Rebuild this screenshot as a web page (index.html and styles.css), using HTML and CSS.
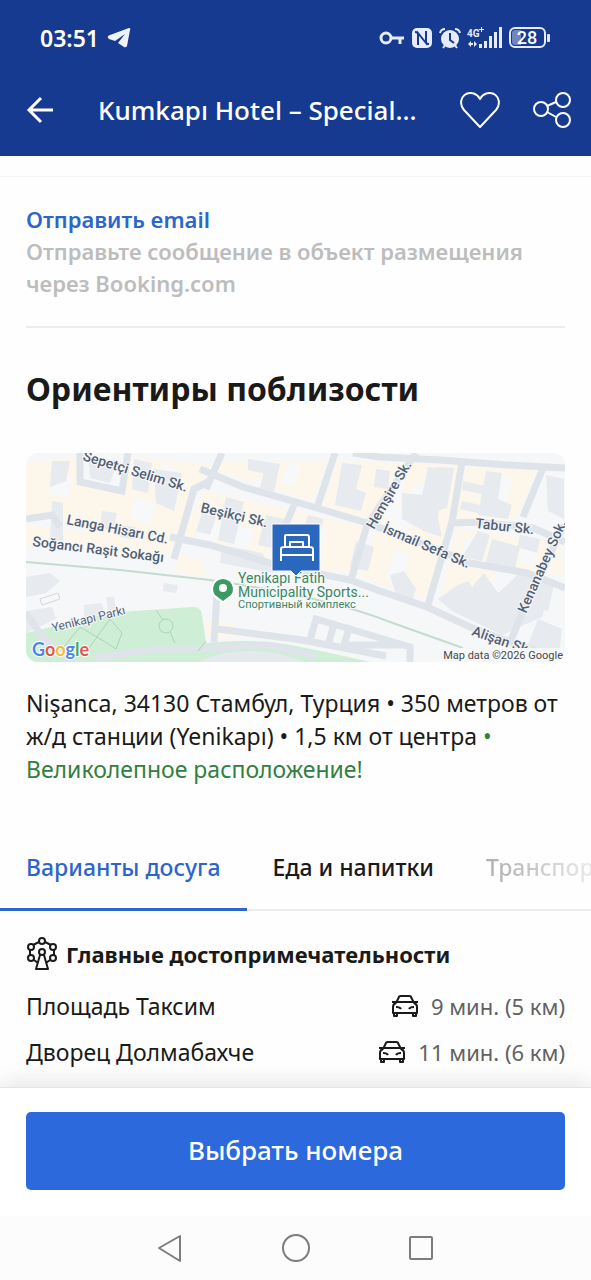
FILE: index.html
```html
<!DOCTYPE html>
<html lang="ru">
<head>
  <meta charset="UTF-8">
  <meta name="viewport" content="width=device-width, initial-scale=1">
  <title>Kumkapı Hotel</title>
  <link rel="stylesheet" href="styles.css">
</head>
<body>
  <header class="header">
    <div class="status">
      <div class="status-left">
        <span class="time">03:51</span>
        <svg width="24" height="22" viewBox="0 0 24 22"><path d="M1 11Q0 9 3 8L22 1Q24 1 23 3L20 19Q19 21 17 20L11 16L18 7L8 14L2 12Z" fill="#eef3ff"/></svg>
      </div>
      <div class="status-right">
        <svg width="26" height="18" viewBox="0 0 26 18" fill="none" stroke="#e6ecfb" stroke-width="3"><circle cx="7" cy="9" r="5"/><path d="M12 9h13M21 9v6"/></svg>
        <svg width="22" height="22" viewBox="0 0 22 22"><rect x="1" y="1" width="20" height="20" rx="5" fill="#e6ecfb"/><path d="M7 18V6L15 16V4M7 6Q5 5 4 5M15 16Q16 17 18 17" fill="none" stroke="#163a8f" stroke-width="2"/></svg>
        <svg width="22" height="22" viewBox="0 0 22 22"><circle cx="11" cy="12" r="9" fill="#e6ecfb"/><path d="M1 6q1-4 5-4M21 6q-1-4-5-4M4 21l3-4M18 21l-3-4" fill="none" stroke="#e6ecfb" stroke-width="2"/><path d="M11 6v7l4 3" fill="none" stroke="#163a8f" stroke-width="2"/></svg>
        <svg width="36" height="24" viewBox="0 0 36 24" fill="#e6ecfb"><text class="net" x="0" y="11">4G</text><path d="M14 1h1v2h2v1h-2v2h-1V4h-2V3h2zM1 18l3-3v2h2v2H4v2zM10 18l-3-3v6zM12 18h3v4h-3zM17 15h3v7h-3zM22 10h3v12h-3zM27 6h3v16h-3zM32 1h3v21h-3z"/></svg>
        <svg width="42" height="22" viewBox="0 0 42 22"><rect x="1" y="1" width="35" height="19" rx="5" fill="none" stroke="#e6ecfb" stroke-width="2"/><path d="M3 6q0-3 3-3h6v15H6q-3 0-3-3z" fill="#6f86c0"/><rect x="38" y="7" width="3" height="8" rx="1" fill="#e6ecfb"/><text class="battery" x="18" y="17" text-anchor="middle">28</text></svg>
      </div>
    </div>
    <div class="appbar">
      <button class="icon-btn back" aria-label="Назад">
        <svg width="28" height="28" viewBox="0 0 28 28" fill="none" stroke="#fff" stroke-width="3"><path d="M27 14H3M15 2L3 14l12 12"/></svg>
      </button>
      <h1 class="title">Kumkapı Hotel – Special...</h1>
      <button class="icon-btn" aria-label="В избранное">
        <svg width="40" height="36" viewBox="0 0 40 36" fill="none" stroke="#fff" stroke-width="2" stroke-linejoin="round"><path d="M20 35L4 18C-1 12 1 5 6 2c5-2 11-1 14 5 3-6 9-7 14-5 5 3 7 10 2 16z"/></svg>
      </button>
      <button class="icon-btn" aria-label="Поделиться">
        <svg width="38" height="36" viewBox="0 0 38 36" fill="none" stroke="#fff" stroke-width="2"><circle cx="8" cy="17" r="7"/><circle cx="30" cy="8" r="7"/><circle cx="30" cy="28" r="7"/><path d="M14 14l9-4M14 20l9 5"/></svg>
      </button>
    </div>
  </header>

  <main class="content">
    <section class="contact">
      <a href="#" class="email">Отправить email</a>
      <p class="note">Отправьте сообщение в объект размещения через Booking.com</p>
    </section>

    <section class="nearby">
      <h2>Ориентиры поблизости</h2>
      <svg class="map" viewBox="0 0 539 209" role="img" aria-label="Карта">
        <rect width="539" height="209" fill="#f6f7f9"/>
        <!-- кварталы -->
        <g fill="#fdf7eb">
          <path d="M0 10L50 4 52 30 95 38 104 4 185 12 168 40 148 100 26 62 0 62zM0 72L142 88 138 102 0 92z"/>
          <path d="M190 8L302 8 286 48 184 16zM180 38L262 56 240 106 154 82zM152 100L176 108 180 124 150 120zM312 8L432 12 422 96 358 70 298 52z"/>
          <path d="M270 58L338 74 324 120 256 108zM350 78L418 102 400 146 334 124zM440 14L510 18 490 66 430 66zM430 76L534 90 538 124 424 104zM422 112L470 118 464 140 414 150zM178 168L210 170 206 184 182 184z"/>
        </g>
        <!-- дворы -->
        <g fill="#f7f8fa">
          <path d="M30 20l16 4-4 22-20-6zM136 10l16 8-10 26-14-6zM228 24l22 6-6 14-18-6zM262 10l14 4-8 20-12-4zM176 66l20 6-8 20-20-6zM318 32l22 6-4 20-28-8zM366 20l14 4-8 30 18 12-10 14-22-18zM276 68l24 8-8 32-28-6zM388 30l14 4-4 16-12-4zM474 22l12 4-8 34-14-4zM440 84l14 4-6 18-12-4zM498 88l14 6-4 20-16-6zM370 96l14 6-10 30-14-6zM212 72l16 6-8 20-16-6zM110 44l20 8-8 20-18-8z"/>
        </g>
        <!-- здания -->
        <g fill="#e7eaef">
          <path d="M26 8h18l-4 20-16 6zM62 4l30 4-8 22-20-5zM76 58l15 2-4 18-13-3zM108 6l18 4-4 30-16-4zM128 16l28 4-8 38-18-8zM96 72l14 2-3 12-13-2zM26 48l11 2v38l-13-2zM176 60l14 4-6 18-14-4zM200 44l18 5-10 42-16-4z"/>
          <path d="M222 6l26 4-2 12-24-5zM240 9l14 2-6 28-14-4zM240 62l18 4-8 30-18-4zM196 92l40 8 12 20-54-10zM316 10l20 2-6 24 10 4-5 18-26-6zM350 16l14 2-2 18-14-2zM376 40l20 2 6-28 14 2-4 50 4 18-18-6-22-12z"/>
          <path d="M410 14l18 1-7 40-14 4zM460 18l16 2-4 26 14 6-4 14-30-4zM437 28l22 5-3 8-20-4zM436 48l18 4-2 8-18-4zM452 78l12 4-8 26-20-4zM466 86l28 8-5 22-30-4zM494 82l20 4-3 14-20-6zM330 88l18 6-6 24-18-4zM282 62l16 4-4 12-16-4z"/>
          <path d="M432 132l10-4 4 6 12-14 14 20 24-22 30 12-10 34-40 18-50-24-14-12zM364 122l14-4 12 18-4 12-16-6zM0 124l24-4 10 8-14 12-20 4zM138 130l14 2-2 8-13-2zM80 144h8l2 12-8 2zM0 158l26-4 4 12-30 14zM58 152l18-2 2 12-20 2zM512 166l24 10-3 26-32-8zM508 126l20 6-6 26-20-6zM520 22l18 4v40l-16-8z"/>
        </g>
        <path d="M0 180C40 171 65 163 94 159L166 154Q175 153 176 162L180 190Q230 185 270 193T344 209H0z" fill="#ceefd6"/>
        <path d="M172 209Q206 193 250 200L280 209z" fill="#e3e9ec"/>
        <!-- улицы -->
        <g fill="none" stroke="#dee4ea" stroke-width="7">
          <path d="M0 66L26 62 34 74M54 0V29L96 38 102 0M184 28L168 36 148 106M144 84L184 92 247 111 324 127 354 138 401 154 444 174 487 190 539 208"/>
          <path d="M174 16L217 34 284 53 341 70M180 36L196 0M309 0L291 55M268 52L252 90M390 0L341 72 325 127M327 0L354 4 414 7 481 12 539 15M436 9L426 69 402 152M517 15L497 64M427 70L451 69 507 75 539 89M341 70L390 88 444 110 501 120 539 135M538 72L498 155 484 190"/>
          <path d="M191 140L188 189M192 176L276 187 360 203M0 160L18 186 38 204M70 205L130 196 188 195 240 192 290 203"/>
          <path d="M284 187L290 166 384 194V209M309 168L302 192M324 172L318 192H376"/>
        </g>
        <path d="M0 109L94 117 184 127Q300 144 364 169L437 195" fill="none" stroke="#c4dccd" stroke-width="2"/>
        <g fill="none" stroke="#acd3b7">
          <circle cx="140" cy="173" r="7"/>
          <path d="M36 196L54 174 76 187M58 202L84 166 96 180 90 196 76 187M130 157L137 167M144 179L149 190M180 188L172 198"/>
          <path d="M14 146l18-6 2 6-18 6z" stroke="#d3d8de"/>
        </g>
        <!-- подписи улиц -->
        <g class="street">
          <text transform="translate(56 7) rotate(17)">Sepetçi Selim Sk.</text>
          <text transform="translate(40 71) rotate(11)">Langa Hisarı Cd.</text>
          <text transform="translate(6 93) rotate(7)">Soğancı Raşit Sokağı</text>
          <text transform="translate(174 59) rotate(13)">Beşikçi Sk.</text>
          <text transform="translate(348 77) rotate(-60)">Hemşire Sk.</text>
          <text transform="translate(356 79) rotate(23)">İsmail Sefa Sk.</text>
          <text transform="translate(449 75) rotate(6)">Tabur Sk.</text>
          <text transform="translate(500 161) rotate(-66)">Kenanabey Sok.</text>
          <text transform="translate(445 182) rotate(19)">Alişan Sk.</text>
          <text class="park" transform="translate(27 179) rotate(-14)">Yenikapı Parkı</text>
        </g>
        <rect x="418" y="195" width="121" height="14" fill="#f6f7f9"/>
        <g class="place">
          <text x="212" y="130">Yenikapı Fatih</text>
          <text x="212" y="144">Municipality Sports...</text>
          <text class="kind" x="212" y="155">Спортивный комплекс</text>
        </g>
        <path d="M197 151L188 144A12 12 0 1 1 206 144z" fill="#fff"/>
        <path d="M197 148L189 142A10 10 0 1 1 205 142z" fill="#3c9b64"/>
        <circle cx="197" cy="135" r="4" fill="#fff"/>
        <path d="M246 71H294V118H275L270 123 265 118H246z" fill="#2968bd" stroke="#fff"/>
        <path d="M259 94V83Q259 82 260 82H281Q283 82 283 84V94M264 94V89H277V94M255 108V96Q255 94 258 94H283Q287 94 287 96V108M255 102H287" fill="none" stroke="#fff" stroke-width="2" stroke-linejoin="round"/>
        <text class="google" x="6" y="203"><tspan fill="#4c86ec">G</tspan><tspan fill="#e0564a">o</tspan><tspan fill="#f0bd3c">o</tspan><tspan fill="#4c86ec">g</tspan><tspan fill="#45a862">l</tspan><tspan fill="#e0564a">e</tspan></text>
        <text class="copy" x="537" y="206" text-anchor="end">Map data ©2026 Google</text>
      </svg>
      <p class="address">Nişanca, 34130 Стамбул, Турция • 350 метров от ж/д станции (Yenikapı) • 1,5 км от центра <span class="great">• Великолепное расположение!</span></p>
    </section>

    <nav class="tabs">
      <button class="tab active">Варианты досуга</button>
      <button class="tab">Еда и напитки</button>
      <button class="tab faded">Транспорт</button>
    </nav>

    <section class="sights">
      <h3>
        <svg width="32" height="34" viewBox="0 0 32 34" fill="none" stroke="#1a1a1a" stroke-width="2" stroke-linejoin="round"><circle cx="16" cy="4" r="3"/><circle cx="5" cy="10" r="3"/><circle cx="27" cy="10" r="3"/><circle cx="5" cy="21" r="3"/><circle cx="27" cy="21" r="3"/><circle cx="16" cy="15" r="3"/><path d="M13 5L7 8M19 5l6 3M4 13v5M28 13v5M8 23l4 3M24 23l-4 3M14 18l-4 14h12l-4-14"/></svg>
        Главные достопримечательности
      </h3>
      <ul>
        <li>
          <span>Площадь Таксим</span>
          <span class="distance">
            <svg width="28" height="22" viewBox="0 0 28 22" fill="none" stroke="#1a1a1a" stroke-width="2" stroke-linejoin="round"><path d="M5 8L8 2Q8 1 10 1H18Q20 1 20 2L23 8M1 7h26M5 8Q2 9 2 12V18H26V12Q26 9 23 8M3 18v3h3v-3M22 18v3h3v-3M5 12q4 0 5 2M23 12q-4 0-5 2"/></svg>
            9 мин. (5 км)
          </span>
        </li>
        <li>
          <span>Дворец Долмабахче</span>
          <span class="distance">
            <svg width="28" height="22" viewBox="0 0 28 22" fill="none" stroke="#1a1a1a" stroke-width="2" stroke-linejoin="round"><path d="M5 8L8 2Q8 1 10 1H18Q20 1 20 2L23 8M1 7h26M5 8Q2 9 2 12V18H26V12Q26 9 23 8M3 18v3h3v-3M22 18v3h3v-3M5 12q4 0 5 2M23 12q-4 0-5 2"/></svg>
            11 мин. (6 км)
          </span>
        </li>
      </ul>
    </section>
  </main>

  <footer class="footer">
    <button class="choose">Выбрать номера</button>
  </footer>
  <div class="navbar">
    <button class="icon-btn" aria-label="Назад"><svg width="28" height="28" viewBox="0 0 28 28" fill="none" stroke="#7d7d7d" stroke-width="2" stroke-linejoin="round"><path d="M23 2v25L2 14z"/></svg></button>
    <button class="icon-btn" aria-label="Домой"><svg width="28" height="28" viewBox="0 0 28 28" fill="none" stroke="#7d7d7d" stroke-width="2"><circle cx="14" cy="14" r="13"/></svg></button>
    <button class="icon-btn" aria-label="Недавние"><svg width="28" height="28" viewBox="0 0 28 28" fill="none" stroke="#7d7d7d" stroke-width="2"><rect x="3" y="3" width="22" height="22" rx="1"/></svg></button>
  </div>
</body>
</html>
```
FILE: styles.css
```css
* {
  box-sizing: border-box;
}
body {
  margin: 0;
  min-height: 100vh;
  display: flex;
  flex-direction: column;
  font-family: "Noto Sans", "Open Sans", sans-serif;
  font-size: 23px;
  color: #1a1a1a;
  background-color: #fefefe;
}
h1, h2, h3, p, ul {
  margin: 0;
  padding: 0;
}
svg {
  flex-shrink: 0;
}
button {
  font: inherit;
  color: inherit;
  background: none;
  border: none;
  padding: 0;
  cursor: pointer;
}
.header {
  background-color: #163a8f;
  color: #fff;
}
.status {
  display: flex;
  justify-content: space-between;
  align-items: center;
  height: 76px;
  padding: 0 40px;
}
.status-left, .status-right {
  display: flex;
  align-items: center;
  gap: 8px;
}
.status-right {
  gap: 6px;
}
.time {
  font-weight: 600;
}
.net {
  font: bold 10px Roboto, sans-serif;
}
.battery {
  font: 500 18px Roboto, sans-serif;
  fill: #fff;
}
.appbar {
  display: flex;
  align-items: center;
  height: 80px;
  padding: 0 20px 12px 26px;
}
.icon-btn {
  display: flex;
}
.back {
  margin-right: 44px;
}
.title {
  flex: 1;
  font-size: 26px;
  line-height: 36px;
  font-weight: 500;
  white-space: nowrap;
}
.appbar .icon-btn + .icon-btn {
  margin-left: 33px;
}
.contact {
  margin-top: 20px;
  padding: 26px 26px 27px;
  border-top: 1px solid #f5f5f5;
  font-size: 22px;
  font-weight: 600;
  line-height: 32px;
}
.email {
  color: #2c66cc;
  text-decoration: none;
}
.note {
  color: #bdbdbd;
}
.nearby {
  margin: 0 26px;
  padding-top: 40px;
  border-top: 2px solid #ececec;
}
h2 {
  font-size: 32px;
  line-height: 42px;
  font-weight: 700;
}
.map {
  display: block;
  width: 100%;
  margin: 43px 0 25px;
  border-radius: 12px;
}
.street {
  font: 500 14px Roboto, sans-serif;
  fill: #526073;
  stroke: #f7f8fa;
  stroke-width: 2px;
  paint-order: stroke;
}
.park {
  font-size: 12px;
  font-weight: 400;
}
.place {
  font: 14px Roboto, sans-serif;
  fill: #3c8763;
  stroke: #f7f8fa;
  stroke-width: 2px;
  paint-order: stroke;
}
.kind {
  font-size: 11px;
}
.google {
  font: bold 18px Lato, sans-serif;
  stroke: #fff;
  stroke-width: 2px;
  paint-order: stroke;
}
.copy {
  font: 11px Roboto, sans-serif;
  fill: #4a4a4a;
}
.address {
  line-height: 33px;
}
.great {
  color: #328040;
}
.tabs {
  display: flex;
  margin-top: 39px;
  overflow: hidden;
  box-shadow: inset 0 -2px #ececec;
}
.tab {
  height: 86px;
  padding: 0 26px;
  white-space: nowrap;
  border-bottom: 3px solid transparent;
  font-weight: 500;
}
.active {
  color: #2c66cc;
  border-bottom-color: #2c66cc;
}
.faded {
  background: linear-gradient(90deg, #a0a0a0, #e8e8e8 130px);
  background-clip: text;
  color: transparent;
}
.sights {
  padding: 25px 26px 12px;
}
h3 {
  display: flex;
  align-items: center;
  gap: 8px;
  height: 36px;
  margin-bottom: 11px;
  font-size: 22px;
  font-weight: 700;
}
ul {
  list-style: none;
}
li {
  display: flex;
  justify-content: space-between;
  align-items: center;
  height: 46px;
}
.distance {
  display: flex;
  align-items: center;
  gap: 12px;
  font-size: 22px;
  color: #626262;
}
.footer {
  margin-top: auto;
  padding: 24px 26px 26px;
  background-color: #fff;
  border-top: 1px solid #e4e4e4;
  box-shadow: 0 -6px 20px rgba(0, 0, 0, 0.09);
}
.choose {
  display: block;
  width: 100%;
  height: 78px;
  padding-bottom: 2px;
  font-size: 26px;
  font-weight: 500;
  color: #fff;
  background-color: #2c69dc;
  border-radius: 5px;
}
.navbar {
  position: relative;
  display: flex;
  justify-content: center;
  align-items: center;
  gap: 97px;
  height: 64px;
  background-color: #fcfcfc;
}
```
